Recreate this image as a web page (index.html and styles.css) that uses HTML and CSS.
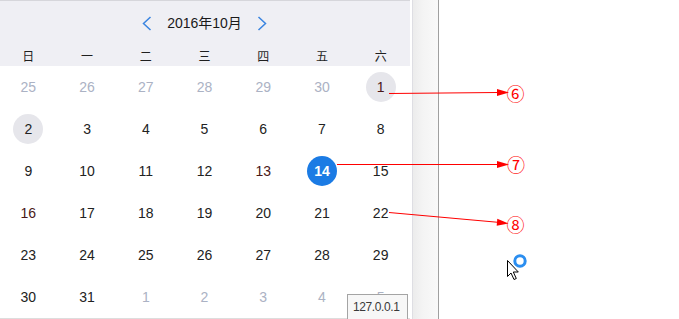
FILE: index.html
```html
<!DOCTYPE html>
<html lang="zh">
<head>
<meta charset="utf-8">
<title>日历</title>
<link rel="stylesheet" href="styles.css">
</head>
<body>
<div class="page">
  <div class="calendar">
    <div class="cal-inner">
      <div class="cal-head">
        <div class="nav">
          <span class="chev"><svg width="10" height="15" viewBox="0 0 10 15"><polyline points="8.5,1 1.5,7.5 8.5,14" fill="none" stroke="#3a84e0" stroke-width="1.5"/></svg></span>
          <span class="title">2016年10月</span>
          <span class="chev"><svg width="10" height="15" viewBox="0 0 10 15"><polyline points="1.5,1 8.5,7.5 1.5,14" fill="none" stroke="#3a84e0" stroke-width="1.5"/></svg></span>
        </div>
        <div class="weekdays">
          <span>日</span><span>一</span><span>二</span><span>三</span><span>四</span><span>五</span><span>六</span>
        </div>
      </div>
      <div class="days">
        <div class="d muted"><span>25</span></div>
        <div class="d muted"><span>26</span></div>
        <div class="d muted"><span>27</span></div>
        <div class="d muted"><span>28</span></div>
        <div class="d muted"><span>29</span></div>
        <div class="d muted"><span>30</span></div>
        <div class="d red"><span class="ring">1</span></div>

        <div class="d"><span class="ring">2</span></div>
        <div class="d"><span>3</span></div>
        <div class="d"><span>4</span></div>
        <div class="d"><span>5</span></div>
        <div class="d"><span>6</span></div>
        <div class="d"><span>7</span></div>
        <div class="d"><span>8</span></div>

        <div class="d"><span>9</span></div>
        <div class="d"><span>10</span></div>
        <div class="d"><span>11</span></div>
        <div class="d"><span>12</span></div>
        <div class="d red"><span>13</span></div>
        <div class="d"><span class="sel">14</span></div>
        <div class="d"><span>15</span></div>

        <div class="d red"><span>16</span></div>
        <div class="d"><span>17</span></div>
        <div class="d"><span>18</span></div>
        <div class="d"><span>19</span></div>
        <div class="d"><span>20</span></div>
        <div class="d"><span>21</span></div>
        <div class="d"><span>22</span></div>

        <div class="d"><span>23</span></div>
        <div class="d"><span>24</span></div>
        <div class="d"><span>25</span></div>
        <div class="d"><span>26</span></div>
        <div class="d"><span>27</span></div>
        <div class="d"><span>28</span></div>
        <div class="d"><span>29</span></div>

        <div class="d"><span>30</span></div>
        <div class="d"><span>31</span></div>
        <div class="d muted"><span>1</span></div>
        <div class="d muted"><span>2</span></div>
        <div class="d muted"><span>3</span></div>
        <div class="d muted"><span>4</span></div>
        <div class="d muted"><span>5</span></div>
      </div>
    </div>
  </div>
  <div class="gutter"></div>
  <div class="divider"></div>
  <div class="rest"></div>
</div>

<div class="tooltip">127.0.0.1</div>

<svg class="annotations" width="679" height="319" viewBox="0 0 679 319">
  <g stroke="#ff0000" stroke-width="1" fill="none">
    <line x1="389" y1="93.5" x2="498" y2="92.5"/>
    <line x1="337" y1="164.5" x2="498" y2="164.5"/>
    <line x1="389" y1="212.5" x2="498" y2="222.3"/>
  </g>
  <g fill="#ff0000">
    <polygon points="497,89 509,92.5 497,96"/>
    <polygon points="497,161 509,164.5 497,168"/>
    <polygon points="497.3,218.8 508.5,223.4 496.7,225.8"/>
  </g>
  <g class="marks" fill="#ff0000">
    <text x="515.5" y="92.5">⑥</text>
    <text x="516" y="163.5">⑦</text>
    <text x="515.5" y="224">⑧</text>
  </g>
  <path d="M507.5,260.5 L507.5,276.5 L511,273 L514,279.5 L516.3,278.5 L513.3,272 L518.3,272 Z" fill="#ffffff" stroke="#000000" stroke-width="1" stroke-linejoin="miter"/>
  <circle cx="520" cy="261" r="5.2" fill="none" stroke="#2b8ef0" stroke-width="3"/>
</svg>
</body>
</html>
```

FILE: styles.css
```css
html, body {
  margin: 0;
  padding: 0;
  width: 679px;
  height: 319px;
  overflow: hidden;
  background: #ffffff;
}

body {
  position: relative;
  font-family: "Liberation Sans", Arial, "Noto Sans CJK SC", sans-serif;
  color: #222222;
}

.page {
  display: flex;
  height: 319px;
}

.calendar {
  width: 412px;
  flex: none;
  border-right: 1px solid #dedee3;
  overflow: hidden;
}

.cal-inner {
  width: 411px;
  margin-left: -1px;
}

.cal-head {
  background: #efeff4;
  border-top: 1px solid #d6d6db;
  height: 65px;
  box-sizing: content-box;
}

.nav {
  height: 44px;
  display: flex;
  align-items: center;
  justify-content: center;
  gap: 15px;
}

.chev {
  display: flex;
  width: 10px;
  height: 15px;
}

.title {
  font-family: "Liberation Sans", Arial, "Noto Sans CJK SC", sans-serif;
  font-size: 14px;
  color: #1a1a1a;
  line-height: 16px;
}

.weekdays {
  height: 21px;
  display: grid;
  grid-template-columns: repeat(7, 1fr);
  align-items: center;
  font-family: "Noto Sans CJK SC", sans-serif;
  font-size: 12px;
  line-height: 14px;
  color: #1f1f1f;
}

.weekdays span {
  text-align: center;
}

.days {
  display: grid;
  grid-template-columns: repeat(7, 1fr);
  grid-auto-rows: 42px;
  border-bottom: 1px solid #dddddd;
  font-size: 14px;
}

.d {
  display: flex;
  align-items: center;
  justify-content: center;
}

.d span {
  display: block;
  width: 30px;
  height: 30px;
  line-height: 30px;
  text-align: center;
  border-radius: 50%;
  color: #222222;
}

.d.muted span {
  color: #abb2c4;
}

.d.red span {
  color: #4a1818;
}

.d span.ring {
  background: #e6e6eb;
}

.d span.sel {
  background: #1b7be4;
  color: #ffffff;
  font-weight: bold;
}

.gutter {
  width: 25px;
  flex: none;
  background: linear-gradient(to right, #ececec, #f4f4f4 40%, #f9f9f9);
}

.divider {
  width: 1px;
  flex: none;
  background: #a0a0a0;
}

.rest {
  flex: 1;
  background: #ffffff;
}

.tooltip {
  position: absolute;
  left: 347px;
  top: 294px;
  width: 61px;
  height: 30px;
  border: 1px solid #a4a4a4;
  background: #f7f7f7;
  color: #3a3a3a;
  font-size: 12px;
  letter-spacing: -0.4px;
  line-height: 14px;
  padding: 5px 0 0 5px;
  box-sizing: border-box;
  white-space: nowrap;
}

.annotations {
  position: absolute;
  left: 0;
  top: 0;
  pointer-events: none;
}

.marks text {
  font-family: "Noto Sans CJK SC", "DejaVu Sans", sans-serif;
  font-size: 18px;
  text-anchor: middle;
  dominant-baseline: central;
}
```
